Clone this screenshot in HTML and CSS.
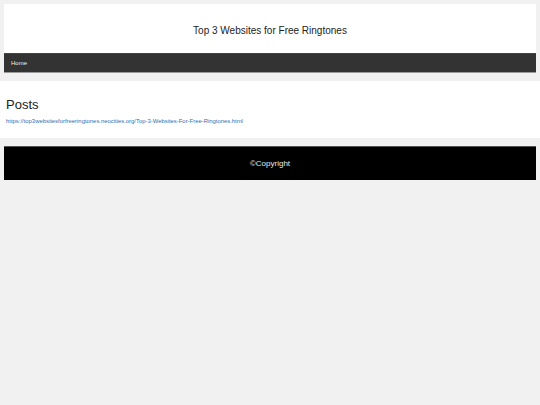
FILE: index.html
```html
<!DOCTYPE html>
<html>
<head>
<meta charset="utf-8">
<link rel="stylesheet" href="styles.css">
</head>
<body>
<header class="masthead">
  <div class="title-box"><h1 class="site-title">Top 3 Websites for Free Ringtones</h1></div>
  <nav class="topnav"><a class="nav-link" href="#">Home</a></nav>
</header>
<main class="posts">
  <h2 class="posts-title">Posts</h2>
  <a class="post-link" href="#">https://top3websitesforfreeringtones.neocities.org/Top-3-Websites-For-Free-Ringtones.html</a>
</main>
<footer class="footer"><span class="copy">©Copyright</span></footer>
</body>
</html>
```
FILE: styles.css
```css
html, body {
  margin: 0;
  padding: 0;
  background: #f1f1f1;
  font-family: "Liberation Sans", Arial, sans-serif;
}
.masthead {
  margin: 4px 4px 0;
}
.title-box {
  background: #fff;
  height: 49px;
  box-sizing: border-box;
  padding-top: 21px;
  text-align: center;
}
.site-title {
  margin: 0;
  font-size: 10px;
  line-height: 12px;
  font-weight: normal;
  color: #222;
}
.topnav {
  background: #333;
  height: 20px;
  box-sizing: border-box;
  border-top: 1px solid #444;
  border-bottom: 1px solid #999;
  display: flex;
  align-items: center;
  padding-left: 7px;
}
.nav-link {
  color: #eee;
  font-size: 6px;
  text-decoration: none;
}
.posts {
  display: flex;
  flex-direction: column;
  align-items: flex-start;
  margin-top: 8px;
  background: #fff;
  height: 57px;
  box-sizing: border-box;
  padding: 16px 6px 0;
}
.posts-title {
  margin: 0;
  font-size: 13px;
  line-height: 15px;
  font-weight: normal;
  color: #222;
}
.post-link {
  margin-top: 5px;
  font-size: 5.9px;
  line-height: 8px;
  color: #2f6fb5;
  text-decoration: none;
}
.footer {
  margin: 8px 4px 0;
  height: 34px;
  box-sizing: border-box;
  background: #000;
  border-top: 1px solid #555;
  display: flex;
  align-items: center;
  justify-content: center;
}
.copy {
  color: #e8e8e8;
  font-size: 8px;
}
```
